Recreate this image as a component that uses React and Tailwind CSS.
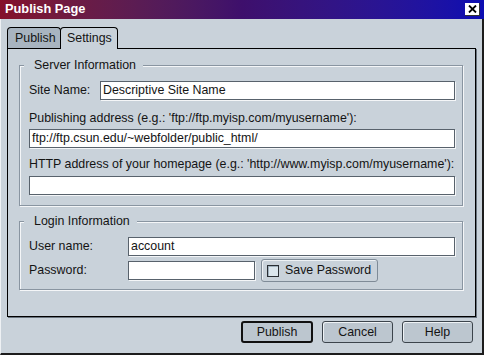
import React from 'react';

const Field = ({ value = '', className = '' }) => (
  <div
    className={`h-[19px] bg-white border border-[#58626c] shadow-[1px_1px_0_#f4f6f8] px-[2px] flex items-center leading-none whitespace-nowrap overflow-hidden ${className}`}
  >
    {value}
  </div>
);

const Group = ({ title, className = '', children }) => (
  <fieldset
    className={`border border-[#8995a1] shadow-[1px_1px_0_#f4f6f8,inset_1px_1px_0_#f4f6f8] pl-[9px] pr-[7px] ${className}`}
  >
    <legend className="ml-[-5px] pl-[10px] pr-[7px] bg-[#c9d2da] leading-[14px]">{title}</legend>
    {children}
  </fieldset>
);

const DlgButton = ({ label, isDefault }) => (
  <button
    className={`h-[22px] rounded-[3px] bg-[#bcc6cf] flex items-center justify-center ${
      isDefault
        ? 'w-[72px] border-2 border-[#111]'
        : 'w-[71px] border border-[#3c444c] shadow-[inset_1px_1px_0_#eef2f5]'
    }`}
  >
    {label}
  </button>
);

export default function App() {
  return (
    <div className="w-[484px] h-[355px] flex flex-col bg-[#c9d2da] text-[12.4px] text-[#141414] font-['Liberation_Sans',Arial,sans-serif] overflow-hidden">
      {/* title bar */}
      <div className="h-[19px] shrink-0 flex items-center justify-between pl-[5px] pr-[4px] bg-gradient-to-r from-[#84102a] via-[#3e0f6c] to-[#0b0db2]">
        <span className="text-white font-bold text-[12.8px] leading-none">Publish Page</span>
        <button className="w-[15px] h-[13px] bg-white border-r border-b border-[#333] flex items-center justify-center">
          <svg width="9" height="8" viewBox="0 0 9 8">
            <path d="M1 0.5 L8 7.5 M8 0.5 L1 7.5" stroke="#000" strokeWidth="1.8" />
          </svg>
        </button>
      </div>

      {/* body */}
      <div className="flex-1 flex flex-col border-l border-l-[#eef1f4] border-r-2 border-r-[#1c1c1c] border-b-2 border-b-[#1c1c1c] pl-[6px] pt-[8px]">
        {/* tabs */}
        <div className="flex items-end h-[21px]">
          <div className="w-[54px] h-[21px] border border-b-0 border-black rounded-t-[4px] bg-[#a8b4c0] pl-[7px] flex items-center">
            Publish
          </div>
          <div className="relative z-10 ml-[-1px] -mb-px w-[58px] h-[22px] border border-b-0 border-black rounded-t-[4px] bg-[#c9d2da] pl-[6px] pb-px flex items-center">
            Settings
          </div>
        </div>

        {/* panel */}
        <div className="w-[469px] h-[269px] border border-black shadow-[1px_1px_0_#6a747e] pl-[11px] pr-[12px]">
          <Group title="Server Information" className="mt-[9px]">
            <div className="flex items-center mt-[9px]">
              <span className="w-[71px]">Site Name:</span>
              <Field value="Descriptive Site Name" className="flex-1" />
            </div>
            <div className="mt-[11px] leading-[14px]">
              Publishing address (e.g.: 'ftp://ftp.myisp.com/myusername'):
            </div>
            <Field value="ftp://ftp.csun.edu/~webfolder/public_html/" className="mt-[4px]" />
            <div className="mt-[9px] leading-[14px]">
              HTTP address of your homepage (e.g.: 'http://www.myisp.com/myusername'):
            </div>
            <Field className="mt-[5px] mb-[10px]" />
          </Group>

          <Group title="Login Information" className="mt-[8px]">
            <div className="flex items-center mt-[9px]">
              <span className="w-[99px]">User name:</span>
              <Field value="account" className="flex-1" />
            </div>
            <div className="flex items-center mt-[3px] mb-[7px]">
              <span className="w-[99px]">Password:</span>
              <Field className="w-[127px]" />
              <div className="ml-[6px] h-[23px] w-[117px] rounded-[3px] border border-[#7f8b97] shadow-[inset_1px_1px_0_#eef2f5] flex items-center pl-[5px] gap-[6px]">
                <span className="w-[12px] h-[12px] border border-[#2a2f34] bg-[#dbe6ed] shadow-[inset_1px_1px_0_#9fb0bd]" />
                <span>Save Password</span>
              </div>
            </div>
          </Group>
        </div>

        {/* buttons */}
        <div className="w-[469px] flex justify-end gap-[9px] pr-[3px] mt-[4px]">
          <DlgButton label="Publish" isDefault />
          <DlgButton label="Cancel" />
          <DlgButton label="Help" />
        </div>
      </div>
    </div>
  );
}
